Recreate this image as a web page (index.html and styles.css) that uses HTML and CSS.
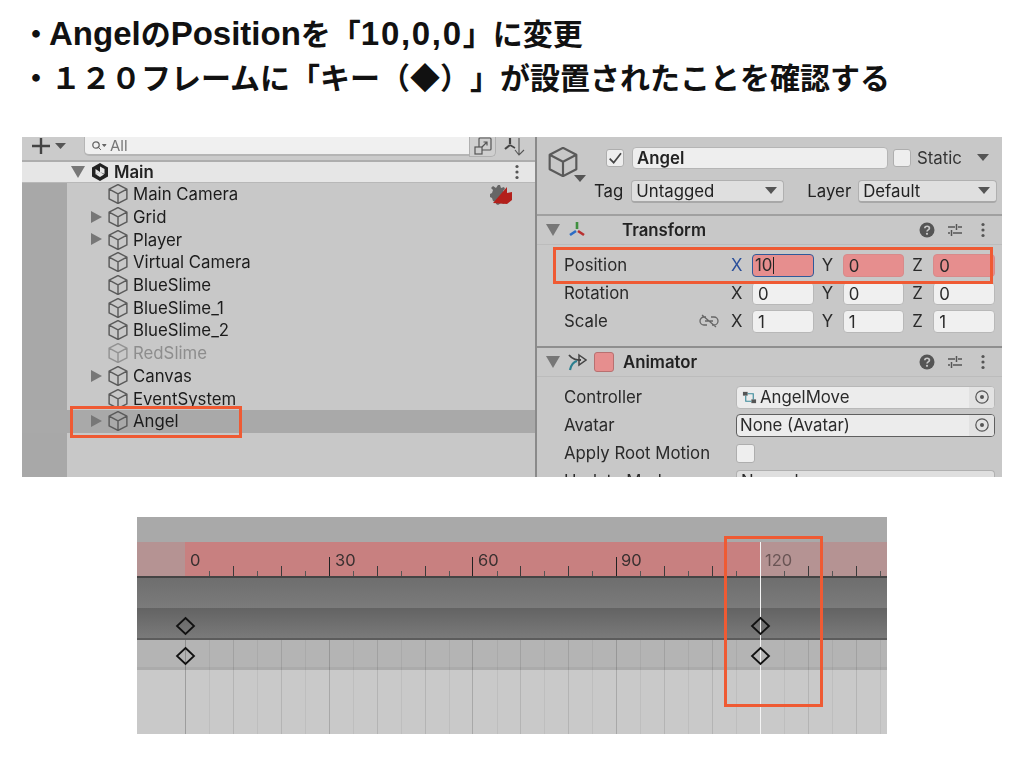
FILE: index.html
```html
<!DOCTYPE html>
<html lang="ja">
    <head>
        <meta charset="utf-8" />
        <meta name="viewport" content="width=device-width, initial-scale=1.0">
        <title>AngelのPositionを変更</title>
        <link rel="stylesheet" href="styles.css">
    </head>
    <body>
        <svg class="defs" width="0" height="0">
            <symbol id="cube" viewBox="1 1 18 18">
                <path d="M10 1.5 18 5.6V14.4L10 18.5 2 14.4V5.6ZM2 5.6 10 9.8 18 5.6M10 9.8V18.5" fill="none" stroke="currentColor" stroke-width="1.3" stroke-linejoin="round"/>
            </symbol>
            <symbol id="help" viewBox="0 0 16 16">
                <circle cx="8" cy="8" r="7.5" fill="#555"/>
                <path d="M5.8 6.2C5.8 3.6 10.4 3.6 10.4 6.2 10.4 8 8 7.8 8 9.6" fill="none" stroke="#c8c8c8" stroke-width="1.7"/>
                <circle cx="8" cy="11.8" r="1.1" fill="#c8c8c8"/>
            </symbol>
            <symbol id="sliders" viewBox="0 0 16 16">
                <path d="M1 5H8M11 5H15M9.5 2V8M1 11H3M6 11H15M4.5 8V14" fill="none" stroke="#555" stroke-width="1.5"/>
            </symbol>
            <symbol id="kebab" viewBox="0 0 6 16">
                <circle cx="3" cy="2.5" r="1.6" fill="#555"/>
                <circle cx="3" cy="8" r="1.6" fill="#555"/>
                <circle cx="3" cy="13.5" r="1.6" fill="#555"/>
            </symbol>
            <symbol id="target" viewBox="0 0 16 16">
                <circle cx="8" cy="8" r="6.2" fill="none" stroke="#555" stroke-width="1.2"/>
                <circle cx="8" cy="8" r="2" fill="#555"/>
            </symbol>
        </svg>

        <div class="heading">
            <p class="heading-line">・<span class="latin first">Angel</span>の<span class="latin">Position</span>を「<span class="latin digits">10,0,0</span>」に変更</p>
            <p class="heading-line">・１２０フレームに「キー（◆）」が設置されたことを確認する</p>
        </div>

        <div class="editor">
            <div class="panes">
                <div class="hierarchy">
                    <div class="toolbar">
                        <svg class="plus-icon" viewBox="0 0 34 16">
                            <path d="M9 0V16M0 8H18" stroke="#444" stroke-width="2.4"/>
                            <path d="M23 5H34L28.500 11Z" fill="#555"/>
                        </svg>
                        <div class="search">
                            <svg class="search-icon" viewBox="0 0 16 12">
                                <circle cx="5" cy="5" r="3.2" fill="none" stroke="#666" stroke-width="1.3"/>
                                <path d="M7.500 7.500 10 10M11.500 4.500H15L13.250 6.500Z" fill="#666" stroke="#666"/>
                            </svg>
                            <span>All</span>
                        </div>
                        <div class="scene-btn">
                            <svg viewBox="0 0 18 18">
                                <rect x="5" y="1" width="12" height="12" rx="1" fill="none" stroke="#555" stroke-width="1.2"/>
                                <rect x="1" y="10" width="7" height="7" fill="#cfcfcf" stroke="#555" stroke-width="1.2"/>
                                <path d="M8 10 13 5M9.500 5H13V8.500" fill="none" stroke="#555" stroke-width="1.2"/>
                            </svg>
                        </div>
                        <svg class="sort-icon" viewBox="0 0 22 20">
                            <path d="M6 1V7M6 8 1 12" stroke="#444" stroke-width="2.2" fill="none"/>
                            <path d="M6 8 11 11" stroke="#444" stroke-width="1.500" fill="none"/>
                            <path d="M15 1V17M11 13 15 18 20 13" stroke="#555" stroke-width="1.100" fill="none"/>
                        </svg>
                    </div>
                    <div class="scene-row">
                        <span class="fold open"></span>
                        <svg class="scene-icon" viewBox="0 0 20 20">
                            <path d="M10 1 18 5.500V14.500L10 19 2 14.500V5.500Z" fill="#222"/>
                            <path d="M10 4.500 14.500 7V12L10 10ZM5.500 7 10 10 5.500 12.500ZM10 10 14 12.500 10 15 6 12.500Z" fill="#e6e6e6"/>
                        </svg>
                        <span class="scene-name">Main</span>
                        <svg class="scene-menu" viewBox="0 0 6 16"><use href="#kebab"/></svg>
                    </div>
                    <ul class="tree">
                        <li class="tree-row">
                            <svg class="cube"><use href="#cube"/></svg>Main Camera
                            <svg class="warn-icon" viewBox="0 0 24 22">
                                <path d="M9 1 11 1 12 4 15 3 16 5 14 7 15 10 18 10 18 12 15 13 14 16 16 18 15 20 12 19 9 21 7 20 7 18 4 17 3 14 1 13 1 10 3 9 4 6 2 4 4 2 7 4Z" fill="#666"/>
                                <path d="M4 19 18 3V9L23 8V16L18 20Z" fill="#b3201b"/>
                            </svg>
                        </li>
                        <li class="tree-row"><span class="fold"></span><svg class="cube"><use href="#cube"/></svg>Grid</li>
                        <li class="tree-row"><span class="fold"></span><svg class="cube"><use href="#cube"/></svg>Player</li>
                        <li class="tree-row"><svg class="cube"><use href="#cube"/></svg>Virtual Camera</li>
                        <li class="tree-row"><svg class="cube"><use href="#cube"/></svg>BlueSlime</li>
                        <li class="tree-row"><svg class="cube"><use href="#cube"/></svg>BlueSlime_1</li>
                        <li class="tree-row"><svg class="cube"><use href="#cube"/></svg>BlueSlime_2</li>
                        <li class="tree-row disabled"><svg class="cube"><use href="#cube"/></svg>RedSlime</li>
                        <li class="tree-row"><span class="fold"></span><svg class="cube"><use href="#cube"/></svg>Canvas</li>
                        <li class="tree-row"><svg class="cube"><use href="#cube"/></svg>EventSystem</li>
                        <li class="tree-row selected"><span class="fold"></span><svg class="cube"><use href="#cube"/></svg>Angel</li>
                    </ul>
                </div>

                <div class="inspector">
                    <div class="go-header">
                        <div class="go-icon">
                            <svg class="go-cube"><use href="#cube"/></svg>
                            <span class="caret go-caret"></span>
                        </div>
                        <div class="go-rows">
                            <div class="go-name-row">
                                <span class="checkbox">
                                    <svg viewBox="0 0 12 12"><path d="M2 6.500 5 9.500 10.500 2.500" fill="none" stroke="#444" stroke-width="1.300"/></svg>
                                </span>
                                <span class="name-field">Angel</span>
                                <span class="checkbox"></span>
                                <span class="static-label">Static</span>
                                <span class="caret"></span>
                            </div>
                            <div class="go-tag-row">
                                <span>Tag</span>
                                <span class="dropdown tag-dropdown">Untagged<span class="caret"></span></span>
                                <span class="layer-label">Layer</span>
                                <span class="dropdown layer-dropdown">Default<span class="caret"></span></span>
                            </div>
                        </div>
                    </div>

                    <div class="comp-head">
                        <span class="fold open"></span>
                        <svg class="comp-icon" viewBox="0 0 20 20">
                            <path d="M10 2V9" stroke="#3f8f3f" stroke-width="2.600"/>
                            <path d="M9 11 3 15" stroke="#2c6cc4" stroke-width="2.600"/>
                            <path d="M11 11 17 15" stroke="#b83030" stroke-width="2.600"/>
                        </svg>
                        <span class="comp-name">Transform</span>
                        <svg class="comp-btn"><use href="#help"/></svg>
                        <svg class="comp-btn"><use href="#sliders"/></svg>
                        <svg class="comp-menu" viewBox="0 0 6 16"><use href="#kebab"/></svg>
                    </div>
                    <div class="transform-props">
                        <div class="prop">
                            <span class="prop-label">Position</span>
                            <div class="vec">
                                <label class="axis"><span class="axis-name active">X</span><span class="num animated focused">10<span class="cursor"></span></span></label>
                                <label class="axis"><span class="axis-name">Y</span><span class="num animated">0</span></label>
                                <label class="axis"><span class="axis-name">Z</span><span class="num animated">0</span></label>
                            </div>
                        </div>
                        <div class="prop">
                            <span class="prop-label">Rotation</span>
                            <div class="vec">
                                <label class="axis"><span class="axis-name">X</span><span class="num">0</span></label>
                                <label class="axis"><span class="axis-name">Y</span><span class="num">0</span></label>
                                <label class="axis"><span class="axis-name">Z</span><span class="num">0</span></label>
                            </div>
                        </div>
                        <div class="prop">
                            <span class="prop-label">Scale
                                <svg class="link-icon" viewBox="0 0 20 14">
                                    <path d="M7 3H5A4 4 0 0 0 5 11H8M12 3H15A4 4 0 0 1 15 11H13M6 7H14M3 1 17 13" fill="none" stroke="#666" stroke-width="1.300"/>
                                </svg>
                            </span>
                            <div class="vec">
                                <label class="axis"><span class="axis-name">X</span><span class="num">1</span></label>
                                <label class="axis"><span class="axis-name">Y</span><span class="num">1</span></label>
                                <label class="axis"><span class="axis-name">Z</span><span class="num">1</span></label>
                            </div>
                        </div>
                    </div>

                    <div class="comp-head">
                        <span class="fold open"></span>
                        <svg class="comp-icon" viewBox="0 0 20 20">
                            <path d="M2 3C6 8 10 8 14 8" fill="none" stroke="#444" stroke-width="1.800"/>
                            <path d="M12 3 19 8 12 13Z" fill="none" stroke="#444" stroke-width="1.500"/>
                            <path d="M10 9C6 10 4 13 3 18" fill="none" stroke="#2b7f8f" stroke-width="2.200"/>
                        </svg>
                        <span class="swatch"></span>
                        <span class="comp-name">Animator</span>
                        <svg class="comp-btn"><use href="#help"/></svg>
                        <svg class="comp-btn"><use href="#sliders"/></svg>
                        <svg class="comp-menu" viewBox="0 0 6 16"><use href="#kebab"/></svg>
                    </div>
                    <div class="animator-props">
                        <div class="prop">
                            <span class="prop-label">Controller</span>
                            <div class="object-field">
                                <svg class="controller-icon" viewBox="0 0 16 16">
                                    <rect x="1" y="2" width="5" height="4" fill="#555"/>
                                    <rect x="10" y="10" width="5" height="4" fill="#555"/>
                                    <path d="M4 6V12H10M6 4H12V10" fill="none" stroke="#3a8a9a" stroke-width="1.200"/>
                                </svg>
                                <span class="object-name">AngelMove</span>
                                <span class="picker"><svg class="target"><use href="#target"/></svg></span>
                            </div>
                        </div>
                        <div class="prop">
                            <span class="prop-label">Avatar</span>
                            <div class="object-field outlined">
                                <span class="object-name">None (Avatar)</span>
                                <span class="picker"><svg class="target"><use href="#target"/></svg></span>
                            </div>
                        </div>
                        <div class="prop">
                            <span class="prop-label">Apply Root Motion</span>
                            <span class="checkbox root-check"></span>
                        </div>
                        <div class="prop">
                            <span class="prop-label">Update Mode</span>
                            <span class="dropdown mode-dropdown">Normal</span>
                        </div>
                    </div>
                </div>
            </div>

            <div class="callout callout-angel"></div>
            <div class="callout callout-position"></div>
        </div>

        <div class="timeline">
            <div class="tl-view">
                <div class="tl-top"></div>
                <div class="ruler">
                    <div class="ruler-mid"></div>
                    <span class="frame f0">0</span>
                    <span class="frame f30">30</span>
                    <span class="frame f60">60</span>
                    <span class="frame f90">90</span>
                    <span class="frame f120">120</span>
                    <svg class="ruler-ticks" viewBox="0 0 750 34">
                        <path d="M72.500 34V29M120.500 34V29M168.500 34V29M216.500 34V29M264.500 34V29M312.500 34V29M360.500 34V29M407.500 34V29M455.500 34V29M503.500 34V29M551.500 34V29M599.500 34V29M647.500 34V29M695.500 34V29M743.500 34V29" stroke="#555"/>
                        <path d="M96.500 34V24M144.500 34V24M240.500 34V24M288.500 34V24M383.500 34V24M431.500 34V24M527.500 34V24M575.500 34V24M671.500 34V24M719.500 34V24" stroke="#3a3a3a"/>
                        <path d="M192.500 34V15M335.500 34V15M479.500 34V15" stroke="#222"/>
                    </svg>
                </div>
                <div class="tl-rule"></div>
                <div class="track track-a"></div>
                <div class="track track-b"></div>
                <div class="tl-rule thin"></div>
                <div class="track track-c"></div>
                <div class="tl-rest"></div>
                <svg class="tl-grid" viewBox="0 0 750 94">
                    <path d="M72.500 0V94M120.500 0V94M168.500 0V94M216.500 0V94M264.500 0V94M312.500 0V94M360.500 0V94M407.500 0V94M455.500 0V94M503.500 0V94M551.500 0V94M599.500 0V94M647.500 0V94M695.500 0V94M743.500 0V94" stroke="#000" stroke-opacity=".05"/>
                    <path d="M96.500 0V94M144.500 0V94M240.500 0V94M288.500 0V94M383.500 0V94M431.500 0V94M527.500 0V94M575.500 0V94M671.500 0V94M719.500 0V94" stroke="#000" stroke-opacity=".1"/>
                    <path d="M192.500 0V94M335.500 0V94M479.500 0V94" stroke="#000" stroke-opacity=".16"/>
                    <path d="M48.500 0V94" stroke="#000" stroke-opacity=".22"/>
                </svg>
                <div class="playhead"></div>
                <svg class="keys" viewBox="0 0 750 60">
                    <path d="M48.500 7 57 15 48.500 23 40 15ZM48.500 37 57 45 48.500 53 40 45ZM623.500 7 632 15 623.500 23 615 15ZM623.500 37 632 45 623.500 53 615 45Z" fill="none" stroke="#111" stroke-width="1.800"/>
                </svg>
            </div>
            <div class="callout callout-key"></div>
        </div>
    </body>
</html>
```

FILE: styles.css
```css
* {
    box-sizing: border-box;
}

body {
    margin: 0;
    background-color: white;
    font-family: Inter, "Liberation Sans", "Noto Sans CJK JP", sans-serif;
    color: #222;
}

.defs {
    position: absolute;
}

/* slide heading */
.heading {
    padding: 11px 0 0 21px;
    height: 102px;
}

.heading-line {
    margin: 0;
    height: 45px;
    line-height: 45px;
    font-family: "Liberation Sans", "Noto Sans CJK JP", sans-serif;
    font-size: 30px;
    font-weight: 700;
    color: #111;
    white-space: nowrap;
    text-spacing-trim: space-all;
}

.latin {
    font-size: 33px;
}

.latin.first {
    margin-left: -2px;
}

.latin.digits {
    letter-spacing: 1.7px;
}

/* unity window */
.editor {
    position: relative;
    width: 980px;
    height: 340px;
    margin: 35px 0 0 22px;
    font-size: 16.8px;
    overflow: hidden;
}

/* the reference is an enlarged capture, a little soft */
.panes {
    display: flex;
    height: 100%;
    filter: blur(0.4px);
}

.hierarchy {
    width: 513px;
    background-color: #c8c8c8;
}

.toolbar {
    display: flex;
    align-items: flex-start;
    height: 25px;
    padding-left: 10px;
    background-color: #cbcbcb;
    border-bottom: 2px solid #adadad;
}

.plus-icon {
    width: 34px;
    height: 16px;
    margin-top: 1px;
}

.search {
    display: flex;
    align-items: center;
    width: 385px;
    height: 19px;
    margin-left: 18px;
    padding-left: 6px;
    background-color: #f0f0f0;
    border-left: 1px solid #b5b5b5;
    border-bottom: 2px solid #b5b5b5;
    border-radius: 0 0 0 5px;
    color: #777;
    font-size: 15px;
}

.search-icon {
    width: 16px;
    height: 12px;
    margin-right: 3px;
}

.scene-btn {
    display: flex;
    justify-content: center;
    width: 27px;
    height: 20px;
    background-color: #cfcfcf;
    border: 1px solid #b0b0b0;
    border-top: 0;
    border-radius: 0 0 5px 0;
}

.scene-btn svg {
    width: 18px;
    height: 18px;
}

.sort-icon {
    width: 22px;
    height: 20px;
    margin-left: 8px;
}

.scene-row {
    display: flex;
    align-items: center;
    height: 21px;
    padding-left: 49px;
    background-color: #e6e6e6;
    border-bottom: 1px solid #b8b8b8;
}

.scene-icon {
    width: 20px;
    height: 20px;
    margin: 0 4px 0 5px;
}

.scene-name {
    flex: 1;
    font-weight: 600;
}

.scene-menu {
    width: 6px;
    height: 16px;
    margin-right: 15px;
}

.tree {
    height: 294px;
    margin: 0;
    padding: 0;
    list-style: none;
    background: linear-gradient(to right, #a8a8a8 45px, #c8c8c8 45px);
}

.tree-row {
    position: relative;
    display: flex;
    align-items: center;
    height: 22.7px;
    padding-left: 86px;
    color: #1c1c1c;
    white-space: nowrap;
}

.tree-row .fold {
    position: absolute;
    left: 69px;
    top: 5px;
}

.tree-row.selected {
    background-color: #a9a9a9;
}

.tree-row.disabled {
    color: #8d8d8d;
}

.tree-row.disabled .cube {
    color: #929292;
}

.cube {
    width: 20px;
    height: 20px;
    margin-right: 5px;
    color: #5a5a5a;
}

/* triangle in front of foldable rows */
.fold {
    width: 0;
    height: 0;
    border-style: solid;
    border-color: transparent transparent transparent #777;
    border-width: 6px 0 6px 11px;
}

.fold.open {
    border-color: #777 transparent transparent transparent;
    border-width: 12px 7px 0 7px;
}

.warn-icon {
    position: absolute;
    left: 467px;
    top: 1px;
    width: 24px;
    height: 22px;
}

.inspector {
    width: 467px;
    background-color: #c8c8c8;
    border-left: 2px solid #8a8a8a;
    overflow: hidden;
}

.go-header {
    display: flex;
    height: 79px;
    border-bottom: 2px solid #a0a0a0;
}

.go-icon {
    position: relative;
    width: 57px;
    padding: 10px 0 0 11px;
}

.go-cube {
    width: 30px;
    height: 30px;
    color: #5a5a5a;
}

.go-caret {
    position: absolute;
    left: 37px;
    top: 38px;
}

.go-rows {
    flex: 1;
    padding-top: 10px;
}

.go-name-row {
    display: flex;
    align-items: center;
    height: 21px;
    padding-left: 12px;
}

.checkbox {
    display: flex;
    flex-shrink: 0;
    width: 18px;
    height: 18px;
    background-color: #eeeeee;
    border: 1px solid #aeaeae;
    border-radius: 3px;
}

.name-field {
    width: 256px;
    height: 22px;
    margin: 0 5px 0 8px;
    padding-left: 4px;
    line-height: 21px;
    background-color: #eeeeee;
    border: 1px solid #b5b5b5;
    border-radius: 4px;
    font-weight: 600;
}

.static-label {
    margin: 0 15px 0 6px;
    color: #333;
}

.caret {
    display: inline-block;
    width: 0;
    height: 0;
    border-style: solid;
    border-color: #555 transparent transparent transparent;
    border-width: 7px 6px 0 6px;
}

.go-tag-row {
    display: flex;
    align-items: center;
    height: 24px;
    margin-top: 11px;
}

.dropdown {
    display: flex;
    align-items: center;
    justify-content: space-between;
    height: 23px;
    padding: 0 6px 0 4px;
    background-color: #dfdfdf;
    border: 1px solid #b0b0b0;
    border-bottom: 2px solid #a8a8a8;
    border-radius: 4px;
}

.tag-dropdown {
    width: 153px;
    margin-left: 8px;
}

.layer-label {
    margin-left: 23px;
}

.layer-dropdown {
    width: 139px;
    margin-left: 7px;
}

.comp-head {
    display: flex;
    align-items: center;
    height: 29px;
    padding-left: 9px;
    border-bottom: 1px solid #bcbcbc;
}

.comp-icon {
    width: 20px;
    height: 20px;
    margin-left: 7px;
}

.comp-name {
    flex: 1;
    margin-left: 35px;
    font-weight: 600;
}

.swatch {
    width: 20px;
    height: 20px;
    margin-left: 7px;
    background-color: #e68e8e;
    border: 1px solid #b87070;
    border-radius: 3px;
}

.swatch + .comp-name {
    margin-left: 9px;
}

.comp-btn {
    width: 16px;
    height: 16px;
    margin-right: 12px;
}

.comp-menu {
    width: 6px;
    height: 16px;
    margin: 0 16px 0 5px;
}

.transform-props {
    height: 103px;
    padding-top: 6px;
    border-bottom: 2px solid #8f8f8f;
}

.animator-props {
    padding-top: 6px;
}

.prop {
    display: flex;
    align-items: center;
    height: 28px;
    padding-left: 27px;
    color: #2a2a2a;
}

.prop-label {
    display: flex;
    align-items: center;
    justify-content: space-between;
    flex-shrink: 0;
    width: 166px;
    padding-right: 11px;
    white-space: nowrap;
}

.animator-props .prop-label {
    width: 172px;
}

.link-icon {
    width: 20px;
    height: 14px;
}

.vec {
    display: flex;
    width: 265px;
    gap: 7px;
}

.axis {
    display: flex;
    flex: 1;
}

.axis-name {
    width: 22px;
    padding-left: 1px;
    line-height: 22px;
}

.axis-name.active {
    color: #2a4f9a;
}

.num {
    flex: 1;
    height: 23px;
    padding-left: 5px;
    line-height: 22px;
    background-color: #f0f0f0;
    border: 1px solid #b8b8b8;
    border-radius: 4px;
}

.num.animated {
    background-color: #e68e8e;
    border-color: #d88a8a;
}

.num.focused {
    display: flex;
    align-items: center;
    padding-left: 2px;
    border: 1.5px solid #2f5a9a;
}

.cursor {
    width: 1px;
    height: 17px;
    margin-left: 1px;
    background-color: #222;
}

.object-field {
    display: flex;
    align-items: center;
    width: 259px;
    height: 23px;
    background-color: #ececec;
    border: 1px solid #b8b8b8;
    border-radius: 4px;
    overflow: hidden;
}

.object-field.outlined {
    border: 1.5px solid #5f5f5f;
}

.controller-icon {
    width: 15px;
    height: 15px;
    margin-left: 5px;
}

.object-name {
    flex: 1;
    padding-left: 3px;
}

.picker {
    display: flex;
    align-items: center;
    justify-content: center;
    width: 25px;
    height: 100%;
    background-color: #e2e2e2;
}

.target {
    width: 16px;
    height: 16px;
}

.root-check {
    width: 19px;
    height: 19px;
}

.mode-dropdown {
    width: 259px;
}

/* red marks on top of the screenshots */
.callout {
    position: absolute;
    border: 3px solid #ef5a33;
}

.callout-angel {
    left: 48px;
    top: 269px;
    width: 172px;
    height: 32px;
}

.callout-position {
    left: 531px;
    top: 110px;
    width: 440px;
    height: 37px;
}

.callout-key {
    left: 587px;
    top: 19px;
    width: 99px;
    height: 171px;
}

/* animation window */
.timeline {
    position: relative;
    width: 750px;
    height: 217px;
    margin: 40px 0 0 137px;
    overflow: hidden;
}

.tl-view {
    position: relative;
    height: 100%;
    filter: blur(0.4px);
}

.tl-top {
    height: 25px;
    background-color: #a9a9a9;
}

.ruler {
    position: relative;
    height: 34px;
    background-color: #b59393;
}

.ruler-mid {
    position: absolute;
    left: 48px;
    width: 575px;
    height: 100%;
    background-color: #c88080;
}

.ruler-ticks {
    position: absolute;
    left: 0;
    top: 0;
    width: 750px;
    height: 34px;
}

.frame {
    position: absolute;
    top: 8px;
    font-size: 16.5px;
    color: #3a3030;
}

.f0 {
    left: 53px;
}

.f30 {
    left: 198px;
}

.f60 {
    left: 341px;
}

.f90 {
    left: 484px;
}

.f120 {
    left: 628px;
    color: #6a5555;
}

.tl-rule {
    height: 2px;
    background-color: #444;
}

.tl-rule.thin {
    background-color: #5c5c5c;
}

.track-a {
    height: 30px;
    background: linear-gradient(#6e6e6e, #7b7b7b);
}

.track-b {
    height: 30px;
    background: linear-gradient(#636363, #7a7a7a);
}

.track-c {
    height: 30px;
    background-color: #b4b4b4;
    border-bottom: 3px solid #ababab;
}

.tl-rest {
    height: 64px;
    background-color: #c9c9c9;
}

.tl-grid {
    position: absolute;
    left: 0;
    top: 123px;
    width: 750px;
    height: 94px;
}

.playhead {
    position: absolute;
    left: 623px;
    top: 25px;
    width: 1px;
    height: 192px;
    background-color: #f4f4f4;
}

.keys {
    position: absolute;
    left: 0;
    top: 94px;
    width: 750px;
    height: 60px;
}
```
